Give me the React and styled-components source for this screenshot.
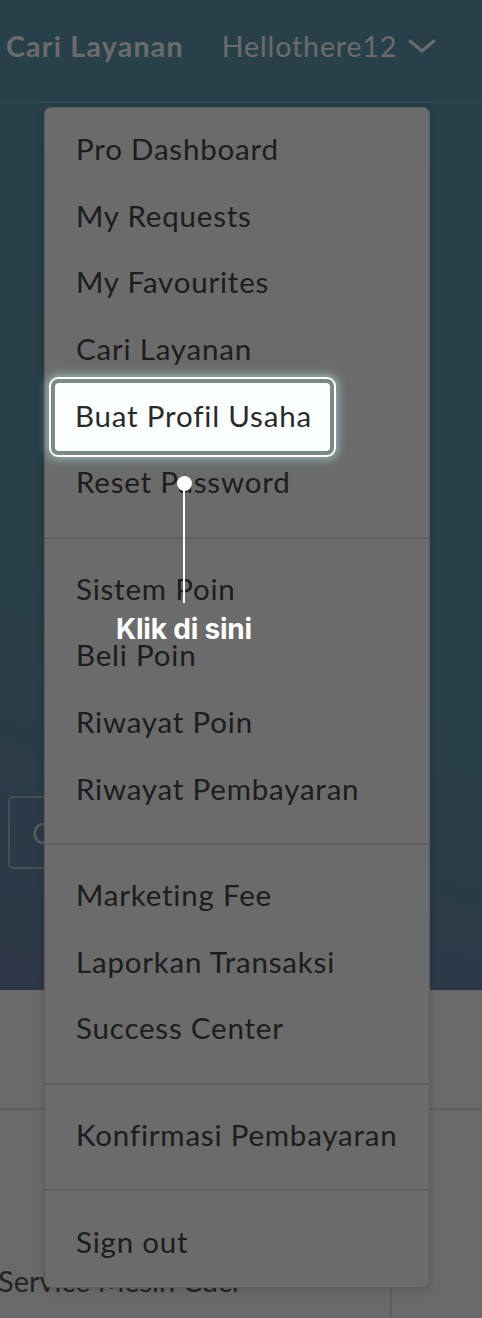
import React from "react";
import styled, { createGlobalStyle } from "styled-components";

const GlobalStyle = createGlobalStyle`
  html, body {
    margin: 0;
    padding: 0;
    background: #6a6a6a;
  }
  * {
    box-sizing: border-box;
  }
`;

const menuGroups = [
  ["Pro Dashboard", "My Requests", "My Favourites", "Cari Layanan", "Buat Profil Usaha", "Reset Password"],
  ["Sistem Poin", "Beli Poin", "Riwayat Poin", "Riwayat Pembayaran"],
  ["Marketing Fee", "Laporkan Transaksi", "Success Center"],
  ["Konfirmasi Pembayaran"],
  ["Sign out"],
];

export default function App() {
  return (
    <>
      <GlobalStyle />
      <Screen>
        <Header>
          <NavLink bold>Cari Layanan</NavLink>
          <NavLink>
            Hellothere12
            <svg width="30" height="18" viewBox="0 0 30 18" fill="none">
              <path d="M3 4l12 10 12-10" stroke="currentColor" strokeWidth="3" strokeLinecap="round" strokeLinejoin="round" />
            </svg>
          </NavLink>
        </Header>

        <Hero>
          <OutlineButton>Cari</OutlineButton>
        </Hero>

        <Content>
          <TopStrip />
          <ServiceCard>
            <CardTitle>Service Mesin Cuci</CardTitle>
          </ServiceCard>
        </Content>

        <Dropdown>
          {menuGroups.map((group, i) => (
            <React.Fragment key={i}>
              {i > 0 && <Divider />}
              <Group>
                {group.map((item) => (
                  <MenuItem key={item}>{item}</MenuItem>
                ))}
              </Group>
            </React.Fragment>
          ))}
        </Dropdown>

        <Backdrop />

        <Spotlight>
          <SpotInner>Buat Profil Usaha</SpotInner>
        </Spotlight>

        <Pointer>
          <Dot />
          <Stem />
          <PointerLabel>Klik di sini</PointerLabel>
        </Pointer>
      </Screen>
    </>
  );
}

const Screen = styled.div`
  position: relative;
  width: 482px;
  height: 1318px;
  overflow: hidden;
  display: flex;
  flex-direction: column;
  font-family: Lato, "Liberation Sans", sans-serif;
  background: #fafafa;
`;

const Header = styled.header`
  height: 103px;
  flex-shrink: 0;
  display: flex;
  align-items: center;
  gap: 38px;
  padding: 0 0 10px 6px;
  background: #5f99b1;
  border-bottom: 1px solid #7abbd2;
`;

const NavLink = styled.a`
  display: flex;
  align-items: center;
  gap: 10px;
  color: #ffffff;
  font-size: 28.5px;
  font-weight: ${(props) => (props.bold ? 700 : 400)};
  letter-spacing: ${(props) => (props.bold ? "1.25px" : "0.9px")};
  white-space: nowrap;
`;

const Hero = styled.section`
  height: 887px;
  flex-shrink: 0;
  display: flex;
  align-items: flex-end;
  padding: 0 0 121px 8px;
  background: linear-gradient(200deg, #5f99b1 0%, #5e97ae 55%, #6e83a9 100%);
`;

const OutlineButton = styled.button`
  width: 200px;
  height: 73px;
  padding: 0 0 0 22px;
  text-align: left;
  background: transparent;
  border: 2px solid #a9b8c8;
  border-radius: 5px;
  color: #c8d2dc;
  font-family: Lato, "Liberation Sans", sans-serif;
  font-size: 28px;
`;

const Content = styled.section`
  flex: 1;
  display: flex;
  flex-direction: column;
  background: #fafafa;
`;

const TopStrip = styled.div`
  height: 120px;
  border-bottom: 2px solid #dedede;
`;

const ServiceCard = styled.div`
  flex: 1;
  width: 392px;
  display: flex;
  align-items: flex-end;
  padding-bottom: 20px;
  border-right: 2px solid #dedede;
`;

const CardTitle = styled.h3`
  margin: 0 0 0 -2px;
  font-size: 29px;
  font-weight: 400;
  color: #555;
  white-space: nowrap;
`;

const Dropdown = styled.nav`
  position: absolute;
  left: 44px;
  top: 107px;
  width: 386px;
  background: #ffffff;
  border: 1px solid #dcdcdc;
  border-radius: 7px;
  box-shadow: 0 2px 8px rgba(0, 0, 0, 0.15);
  z-index: 1;
`;

const Group = styled.div`
  padding: 10px 0;
`;

const Divider = styled.hr`
  margin: 9px 0;
  border: none;
  border-top: 2px solid #e2e2e2;
`;

const MenuItem = styled.a`
  display: flex;
  align-items: center;
  height: 66.6px;
  padding: 0 0 5px 31px;
  font-size: 29.5px;
  letter-spacing: 0.8px;
  color: #474747;
  white-space: nowrap;
`;

const Backdrop = styled.div`
  position: absolute;
  inset: 0;
  background: rgba(0, 0, 0, 0.58);
  z-index: 2;
`;

const Spotlight = styled.div`
  position: absolute;
  left: 49px;
  top: 377px;
  width: 287px;
  height: 80px;
  padding: 4px;
  border: 2px solid #ffffff;
  border-radius: 9px;
  background: rgba(170, 215, 215, 0.28);
  box-shadow: 0 0 10px 2px rgba(190, 245, 245, 0.55);
  z-index: 3;
`;

const SpotInner = styled.div`
  height: 100%;
  display: flex;
  align-items: center;
  padding: 0 0 4px 20px;
  background: #fbffff;
  border-radius: 4px;
  font-size: 29.5px;
  letter-spacing: 0.8px;
  color: #2a2a2a;
  white-space: nowrap;
`;

const Pointer = styled.div`
  position: absolute;
  left: 84px;
  top: 476px;
  width: 200px;
  display: flex;
  flex-direction: column;
  align-items: center;
  z-index: 3;
`;

const Dot = styled.span`
  width: 15px;
  height: 15px;
  border-radius: 50%;
  background: #ffffff;
`;

const Stem = styled.span`
  width: 2px;
  height: 114px;
  margin-top: -2px;
  background: #ffffff;
`;

const PointerLabel = styled.span`
  margin-top: 9px;
  font-family: Inter, "Liberation Sans", sans-serif;
  font-weight: 700;
  font-size: 28px;
  letter-spacing: -0.2px;
  color: #ffffff;
  white-space: nowrap;
`;
